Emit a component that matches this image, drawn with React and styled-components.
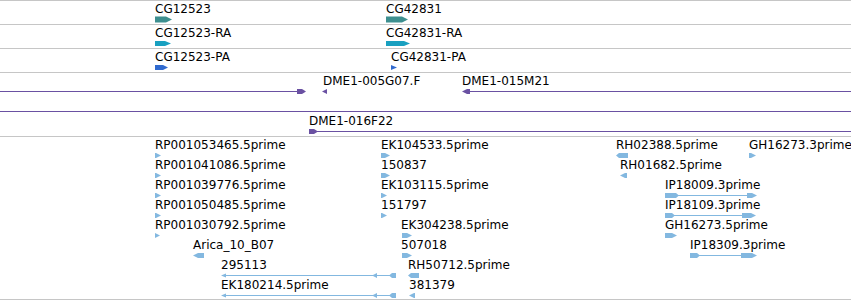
import React from 'react';
import styled, { createGlobalStyle } from 'styled-components';

const GlobalStyle = createGlobalStyle`
	html, body {
		margin: 0;
		padding: 0;
		background: #fff;
	}
	body {
		width: 851px;
		height: 301px;
		overflow: hidden;
		font-family: "DejaVu Sans", "Noto Sans", sans-serif;
	}
`;

const ROW = 20;
const MID = 18.5;

const View = styled.div`
	display: flex;
	flex-direction: column;
	width: 851px;
	border-top: 1px solid #c6c6c6;
`;

const Track = styled.div`
	position: relative;
	height: ${(p) => p.$height}px;
	border-bottom: 1px solid #c6c6c6;
	overflow: hidden;
`;

const Glyphs = styled.svg`
	position: absolute;
	left: 0;
	top: 0;
	width: 100%;
	height: 100%;
	fill: ${(p) => p.$color};
	shape-rendering: auto;
`;

// features sit at their genome coordinate, so labels are placed on the track canvas
const Label = styled.span.attrs((p) => ({
	style: { left: p.$x, top: p.$row * ROW + 1 },
}))`
	position: absolute;
	font-size: 12px;
	line-height: 14px;
	color: #000;
	white-space: nowrap;
`;

const tracks = [
	{
		height: 23,
		color: '#3d8f8f',
		features: [
			{ label: 'CG12523', x: 155, row: 0, parts: [['a', 155, 172, 'r', 6, 6]] },
			{ label: 'CG42831', x: 386, row: 0, parts: [['a', 386, 408, 'r', 6, 6]] },
		],
	},
	{
		height: 23,
		color: '#19a0c0',
		features: [
			{ label: 'CG12523-RA', x: 155, row: 0, parts: [['a', 155, 171, 'r', 5, 6]] },
			{ label: 'CG42831-RA', x: 386, row: 0, parts: [['a', 386, 410, 'r', 5, 6]] },
		],
	},
	{
		height: 23,
		color: '#306acf',
		features: [
			{ label: 'CG12523-PA', x: 155, row: 0, parts: [['a', 155, 168, 'r', 5, 5]] },
			{ label: 'CG42831-PA', x: 391, row: 0, parts: [['a', 391, 397, 'r', 5, 6]] },
		],
	},
	{
		height: 63,
		color: '#6a51a2',
		features: [
			{ row: 0, parts: [['l', -5, 300], ['a', 297, 306, 'r', 5, 4]] },
			{ label: 'DME1-005G07.F', x: 323, row: 0, parts: [['a', 322, 327, 'l', 5, 5]] },
			{ label: 'DME1-015M21', x: 462, row: 0, parts: [['a', 462, 470, 'l', 5, 5], ['l', 468, 860]] },
			{ row: 1, parts: [['l', -5, 860]] },
			{ label: 'DME1-016F22', x: 309, row: 2, parts: [['a', 309, 318, 'r', 5, 4], ['l', 316, 860]] },
		],
	},
	{
		height: 162,
		color: '#83b8e0',
		features: [
			{ label: 'RP001053465.5prime', x: 155, row: 0, parts: [['a', 155, 161, 'r']] },
			{ label: 'RP001041086.5prime', x: 155, row: 1, parts: [['a', 155, 161, 'r']] },
			{ label: 'RP001039776.5prime', x: 155, row: 2, parts: [['a', 155, 161, 'r']] },
			{ label: 'RP001050485.5prime', x: 155, row: 3, parts: [['a', 155, 161, 'r']] },
			{ label: 'RP001030792.5prime', x: 155, row: 4, parts: [['a', 155, 160, 'r']] },
			{ label: 'Arica_10_B07', x: 193, row: 5, parts: [['a', 193, 204, 'l']] },
			{
				label: '295113',
				x: 221,
				row: 6,
				parts: [['l', 223, 390], ['a', 221, 226, 'l', 4], ['a', 372, 377, 'l'], ['a', 389, 396, 'l', 5, 3]],
			},
			{
				label: 'EK180214.5prime',
				x: 221,
				row: 7,
				parts: [['l', 223, 390], ['a', 221, 226, 'l', 4], ['a', 372, 377, 'l'], ['a', 389, 396, 'l', 5, 3]],
			},
			{ label: 'EK104533.5prime', x: 381, row: 0, parts: [['a', 381, 390, 'r']] },
			{ label: '150837', x: 381, row: 1, parts: [['a', 381, 390, 'r']] },
			{ label: 'EK103115.5prime', x: 381, row: 2, parts: [['a', 381, 387, 'r']] },
			{ label: '151797', x: 381, row: 3, parts: [['a', 381, 387, 'r']] },
			{ label: 'EK304238.5prime', x: 401, row: 4, parts: [['a', 402, 412, 'r']] },
			{ label: '507018', x: 401, row: 5, parts: [['a', 402, 412, 'r']] },
			{ label: 'RH50712.5prime', x: 408, row: 6, parts: [['a', 408, 419, 'l', 5, 3]] },
			{ label: '381379', x: 409, row: 7, parts: [['a', 409, 415, 'l']] },
			{ label: 'RH02388.5prime', x: 616, row: 0, parts: [['a', 616, 628, 'l', 5, 3]] },
			{ label: 'GH16273.3prime', x: 749, row: 0, parts: [['a', 749, 756, 'r']] },
			{ label: 'RH01682.5prime', x: 620, row: 1, parts: [['a', 620, 627, 'l']] },
			{
				label: 'IP18009.3prime',
				x: 665,
				row: 2,
				parts: [['a', 665, 679, 'r', 5, 3], ['l', 677, 748], ['a', 747, 757, 'r']],
			},
			{
				label: 'IP18109.3prime',
				x: 665,
				row: 3,
				parts: [['a', 665, 675, 'r', 5, 3], ['l', 673, 743], ['a', 742, 756, 'r']],
			},
			{ label: 'GH16273.5prime', x: 665, row: 4, parts: [['a', 665, 677, 'r']] },
			{
				label: 'IP18309.3prime',
				x: 690,
				row: 5,
				parts: [['a', 690, 700, 'r', 5, 3], ['l', 698, 742], ['a', 741, 757, 'r']],
			},
		],
	},
];

function arrowPoints(x1, x2, dir, h, tip, cy) {
	const t = Math.min(tip, x2 - x1);
	const top = cy - h / 2;
	const bot = cy + h / 2;
	const pts =
		dir === 'r'
			? [[x1, top], [x2 - t, top], [x2, cy], [x2 - t, bot], [x1, bot]]
			: [[x2, top], [x1 + t, top], [x1, cy], [x1 + t, bot], [x2, bot]];
	return pts.map((p) => p.join(',')).join(' ');
}

function Part({ part, row }) {
	const cy = row * ROW + MID;
	if (part[0] === 'l') {
		return <rect x={part[1]} y={cy - 0.5} width={part[2] - part[1]} height={1} />;
	}
	const [, x1, x2, dir, h = 5, tip = 5] = part;
	return <polygon points={arrowPoints(x1, x2, dir, h, tip, cy)} />;
}

export default function App() {
	return (
		<>
			<GlobalStyle />
			<View>
				{tracks.map((track, ti) => (
					<Track key={ti} $height={track.height}>
						<Glyphs $color={track.color}>
							{track.features.map((f, fi) =>
								f.parts.map((part, pi) => <Part key={`${fi}-${pi}`} part={part} row={f.row} />)
							)}
						</Glyphs>
						{track.features
							.filter((f) => f.label)
							.map((f) => (
								<Label key={f.label} $x={f.x} $row={f.row}>
									{f.label}
								</Label>
							))}
					</Track>
				))}
			</View>
		</>
	);
}
